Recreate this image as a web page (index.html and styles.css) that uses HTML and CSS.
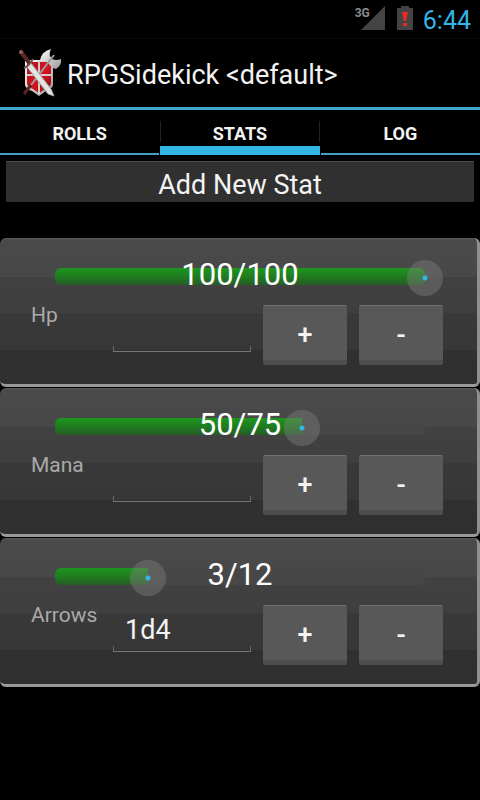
FILE: index.html
```
<!DOCTYPE html>
<html lang="en">
<head>
    <meta charset="UTF-8">
    <meta name="viewport" content="width=device-width, initial-scale=1.0">
    <title>RPGSidekick</title>
    <link rel="stylesheet" href="styles.css">
</head>
<body>
    <div class="status-bar">
        <span class="network">3G</span>
        <svg class="signal" width="24" height="24" viewBox="0 0 24 24"><path d="M24 0V24H0Z" fill="#444"/></svg>
        <svg class="battery" width="16" height="24" viewBox="0 0 16 24">
            <path d="M4 0H12V2H16V24H0V2H4Z" fill="#444"/>
            <path d="M5 6H11L9 15H7ZM6 17H10V20H6Z" fill="#f0281e"/>
        </svg>
        <span class="clock">6:44</span>
    </div>

    <header class="action-bar">
        <svg class="logo" width="44" height="50" viewBox="0 0 44 50">
            <defs>
                <linearGradient id="steel" x1="0" y1="0" x2="1" y2="1">
                    <stop offset="0" stop-color="#fff"/>
                    <stop offset="1" stop-color="#999"/>
                </linearGradient>
                <linearGradient id="red" x1="0" y1="0" x2="1" y2="1">
                    <stop offset="0" stop-color="#a8121a"/>
                    <stop offset="0.5" stop-color="#d81420"/>
                    <stop offset="1" stop-color="#8c0c14"/>
                </linearGradient>
            </defs>
            <!-- shield -->
            <path d="M7 12H35V37Q34 41 28 43L21 48L14 43Q8 41 7 37Z" fill="url(#steel)"/>
            <path d="M9 14H33V36Q32 39 27 41L21 45L15 41Q10 39 9 36Z" fill="url(#red)"/>
            <path d="M21 13V46M9 27H33" stroke="#dcc8c8" stroke-width="2"/>
            <!-- axe -->
            <path d="M22 12Q24 3 33 1Q30 7 34 11Q38 13 43 11Q44 17 38 21Q33 20 31 16Q28 12 22 12Z" fill="url(#steel)"/>
            <path d="M36 7L10 41" stroke="#9c9c9c" stroke-width="2"/>
            <path d="M13 37L6 46" stroke="#5b2420" stroke-width="3"/>
            <!-- sword -->
            <path d="M13 15L33 41L36 48L30 46L9 19Z" fill="#e2e4e0" stroke="#999" stroke-width="1"/>
            <path d="M3 4L12 16" stroke="#5a2826" stroke-width="4"/>
            <path d="M6 20Q11 18 15 11" stroke="#77504a" stroke-width="2" fill="none"/>
            <circle cx="3" cy="4" r="2" fill="#8c625c"/>
        </svg>
        <h1>RPGSidekick &lt;default&gt;</h1>
    </header>

    <nav class="tabs">
        <a href="#rolls">ROLLS</a>
        <a href="#stats" class="selected">STATS</a>
        <a href="#log">LOG</a>
    </nav>

    <main>
        <button class="add-stat" type="button">Add New Stat</button>

        <section class="stat">
            <div class="gauge">
                <div class="track"><div class="fill" style="width: 100%"></div></div>
                <input type="range" min="0" max="100" value="100" aria-label="Hp value">
                <output>100/100</output>
            </div>
            <div class="controls">
                <label for="hp">Hp</label>
                <input type="text" id="hp">
                <button type="button">+</button>
                <button type="button">-</button>
            </div>
        </section>

        <section class="stat">
            <div class="gauge">
                <div class="track"><div class="fill" style="width: 66.67%"></div></div>
                <input type="range" min="0" max="75" value="50" aria-label="Mana value">
                <output>50/75</output>
            </div>
            <div class="controls">
                <label for="mana">Mana</label>
                <input type="text" id="mana">
                <button type="button">+</button>
                <button type="button">-</button>
            </div>
        </section>

        <section class="stat">
            <div class="gauge">
                <div class="track"><div class="fill" style="width: 25%"></div></div>
                <input type="range" min="0" max="12" value="3" aria-label="Arrows value">
                <output>3/12</output>
            </div>
            <div class="controls">
                <label for="arrows">Arrows</label>
                <input type="text" id="arrows" value="1d4">
                <button type="button">+</button>
                <button type="button">-</button>
            </div>
        </section>
    </main>
</body>
</html>
```
FILE: styles.css
```
* {
    box-sizing: border-box;
}
body {
    margin: 0;
    min-height: 100vh;
    background: #000;
    color: #f3f3f3;
    font-family: Roboto, "Liberation Sans", sans-serif;
}
button, input {
    font-family: inherit;
    color: inherit;
}

/* status bar */
.status-bar {
    display: flex;
    justify-content: flex-end;
    height: 39px;
    padding: 6px 9px 0 0;
    border-bottom: 1px solid #080808;
}
.network {
    margin-right: -9px;
    font-size: 12px;
    font-weight: bold;
    line-height: 14px;
    color: #8c8c8c;
}
.battery {
    margin: 0 10px 0 12px;
}
.clock {
    font-size: 25px;
    line-height: 29px;
    color: #33b5e5;
}

/* title */
.action-bar {
    display: flex;
    align-items: center;
    gap: 5px;
    height: 71px;
    padding-left: 18px;
    border-bottom: 3px solid #3fa9cf;
}
h1 {
    margin: 0;
    padding-top: 3px;
    font-size: 27px;
    line-height: 32px;
    font-weight: normal;
}

/* tabs */
.tabs {
    display: grid;
    grid-template-columns: repeat(3, 1fr);
    column-gap: 1px;
    height: 45px;
    background: linear-gradient(#222, #222) 33.3% 11px / 1px 21px no-repeat,
                linear-gradient(#222, #222) 66.7% 11px / 1px 21px no-repeat;
}
.tabs a {
    padding-top: 12px;
    border-bottom: 2px solid #4a9cc8;
    font-size: 18px;
    font-weight: bold;
    line-height: 24px;
    text-align: center;
    text-decoration: none;
    color: #f3f3f3;
}
.tabs .selected {
    border-bottom: 9px solid #33b5e5;
}

/* stats */
.add-stat {
    display: block;
    width: calc(100% - 12px);
    height: 41px;
    margin: 6px 6px 36px;
    padding: 6px 0 0;
    border: 0;
    border-top: 1px solid #4c4c4c;
    background: #303030;
    font-size: 27px;
    line-height: 34px;
}
.stat {
    height: 149px;
    margin-bottom: 1px;
    padding: 22px 34px 0 31px;
    border-right: 3px solid #8f8f8f;
    border-bottom: 3px solid #9a9a9a;
    border-radius: 6px;
    background: linear-gradient(#555 0 1px, #4a4a4a 2px, #484848 39px, #414141 39px, #3f3f3f 75px, #393939 75px, #373737 112px, #303030 112px, #2f2f2f);
}
.gauge {
    display: grid;
    grid-template-rows: 36px;
    align-items: center;
    margin-left: 6px;
}
.gauge > * {
    grid-area: 1 / 1;
}
.track {
    height: 17px;
    margin: 0 18px 3px;
    border-radius: 6px;
    background: #474747;
    overflow: hidden;
}
.fill {
    height: 100%;
    background: linear-gradient(#1e961e, #1f7d1f 50%, #275c27);
}
.gauge input {
    width: 100%;
    height: 36px;
    margin: 0;
    background: none;
    appearance: none;
}
.gauge input::-webkit-slider-thumb {
    width: 36px;
    height: 36px;
    border-radius: 50%;
    background: radial-gradient(circle, #33b5e5 2px, rgba(130, 130, 130, 0.4) 3px);
    appearance: none;
}
.gauge output {
    padding-bottom: 6px;
    font-size: 31px;
    line-height: 30px;
    text-align: center;
    color: #fff;
    pointer-events: none;
}
.controls {
    display: grid;
    grid-template-columns: 70px 1fr 84px 84px;
    column-gap: 12px;
    height: 60px;
    margin-top: 9px;
}
.controls label {
    font-size: 21px;
    line-height: 20px;
    color: #aaa;
}
.controls input {
    width: 100%;
    height: 47px;
    padding: 2px 12px 0;
    border: 0;
    /* bottom line with a short tick at each end */
    background: linear-gradient(#777, #777) bottom / 100% 1px no-repeat,
                linear-gradient(#666, #666) left bottom / 1px 6px no-repeat,
                linear-gradient(#666, #666) right bottom / 1px 6px no-repeat;
    font-size: 27px;
}
.controls button {
    padding: 4px 0 0;
    border: 0;
    border-top: 1px solid #727272;
    border-bottom: 5px solid #4e4e4e;
    border-radius: 2px;
    background: #585858;
    font-size: 27px;
    font-weight: 500;
}
```
